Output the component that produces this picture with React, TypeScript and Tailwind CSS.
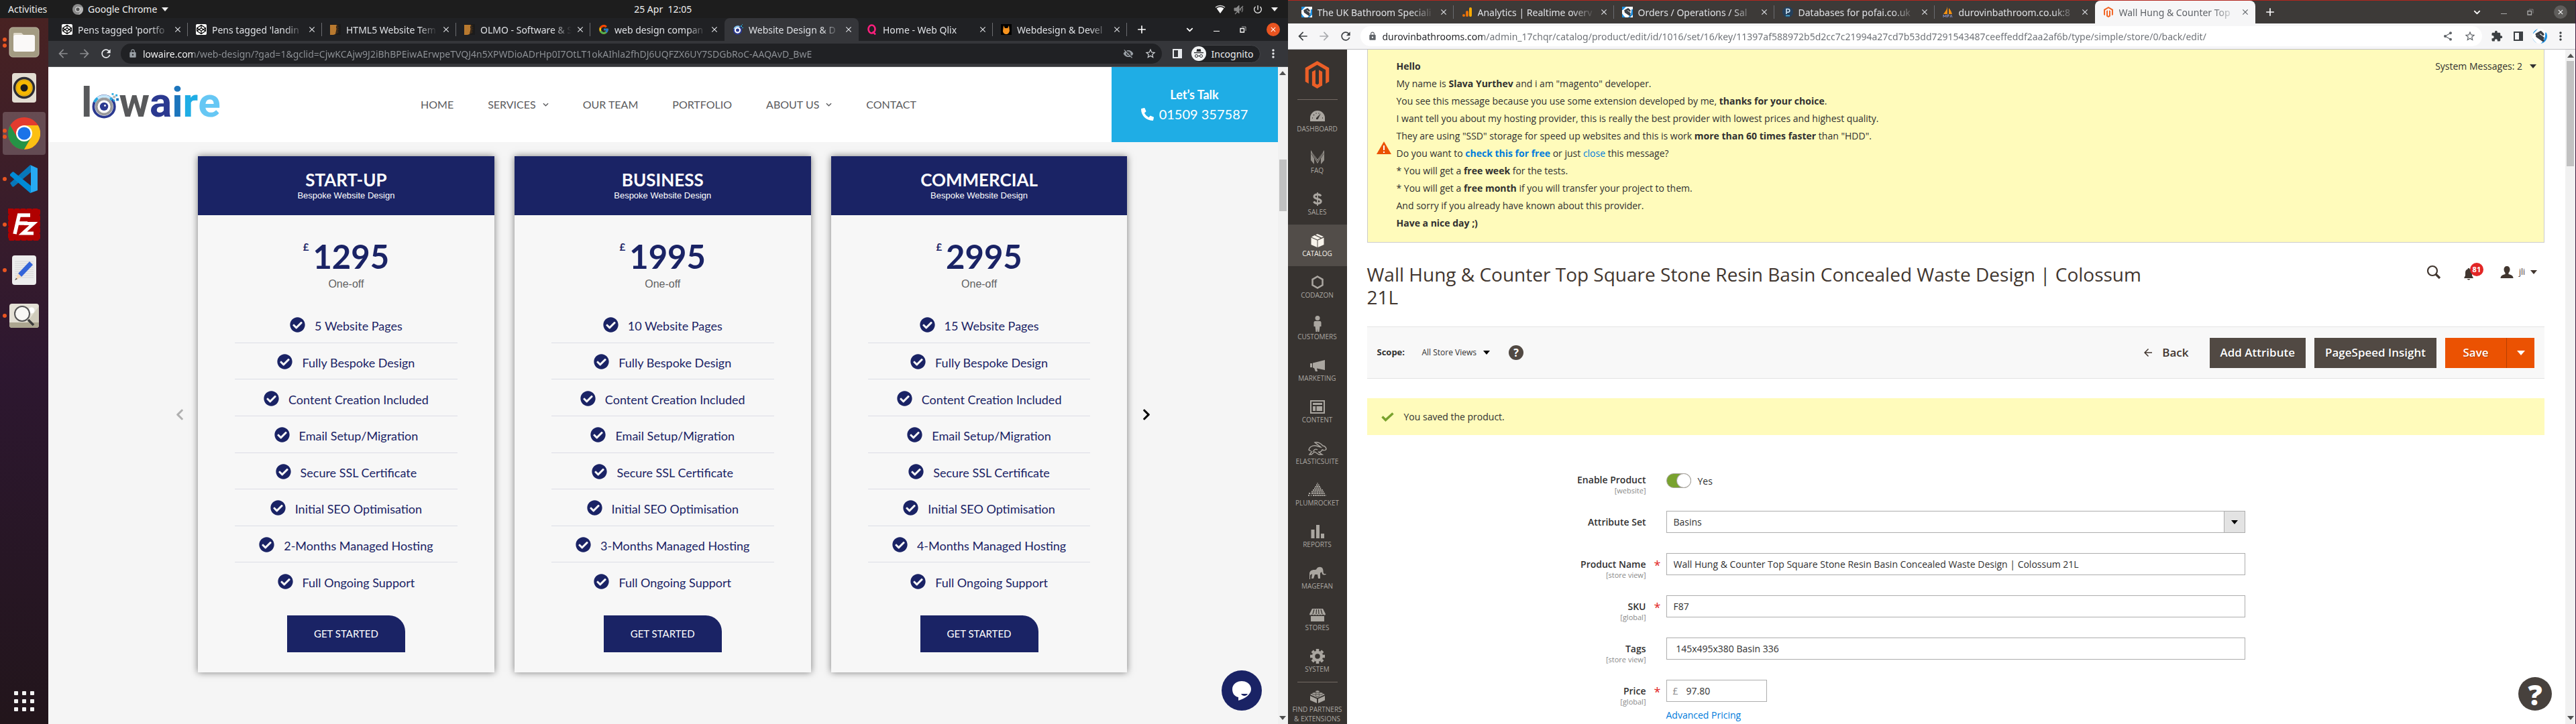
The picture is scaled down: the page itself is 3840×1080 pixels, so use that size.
import React from "react";
import {
  MdArrowBack,
  MdArrowForward,
  MdRefresh,
  MdLock,
  MdStarBorder,
  MdExtension,
  MdShare,
  MdMoreVert,
  MdVisibilityOff,
  MdAdd,
  MdClose,
  MdPowerSettingsNew,
} from "react-icons/md";
import {
  FaCodepen,
  FaMagento,
  FaPhoneAlt,
  FaCheckCircle,
  FaChevronLeft,
  FaChevronRight,
  FaChevronDown,
} from "react-icons/fa";
import { FcGoogle } from "react-icons/fc";

const UI = "font-['Noto_Sans','Open_Sans',sans-serif]";

/* ---------- small shared pieces ---------- */

function Caret({ className = "" }: { className?: string }) {
  return (
    <svg viewBox="0 0 10 6" className={"h-[6px] w-[10px] shrink-0 fill-current " + className} aria-hidden="true">
      <path d="M0 0h10L5 6z" />
    </svg>
  );
}

function Restore() {
  return (
    <svg viewBox="0 0 10 10" className="size-[10px]" fill="none" stroke="currentColor" aria-hidden="true">
      <path d="M1 3.500h5.500v5.500H1z" strokeWidth="1.300" />
      <path d="M3 1h6v6" opacity=".6" />
    </svg>
  );
}

function SidePanel() {
  return (
    <svg viewBox="0 0 14 14" className="size-[14px] fill-current" aria-hidden="true">
      <path fillRule="evenodd" d="M0 0h14v14H0zM2 2v10h6V2z" />
    </svg>
  );
}

/* ---------- favicons ---------- */

const favicons: Record<string, React.ReactNode> = {
  codepen: (
    <span className="flex size-4 items-center justify-center rounded-[2px] bg-white text-black">
      <FaCodepen className="size-[14px]" />
    </span>
  ),
  olmo: (
    <svg viewBox="0 0 16 16" className="size-4">
      <rect width="16" height="16" fill="#1b1b1b" />
      <path d="M0 1h10l-1 4 1 2-1 3-1 5-3 1H0z" fill="#b8792f" />
      <path d="M10 1l3 1-2 2 3 1-3 2 3 1-3 2 2 2-4 3z" fill="#3d2b1a" />
    </svg>
  ),
  google: <FcGoogle className="size-4" />,
  eye: (
    <svg viewBox="0 0 16 16" className="size-4">
      <circle cx="7.500" cy="9" r="5.700" fill="#fff" stroke="#2b3990" strokeWidth="2" />
      <path d="M2.500 7a5.700 5.700 0 0 1 8-3.200" fill="none" stroke="#8fd0f0" strokeWidth="2" />
      <circle cx="7.500" cy="9" r="2.500" fill="#2b3990" />
      <path d="M12 2h2v2h-2zM14 0h1v1h-1zM14 5h2v1h-2z" fill="#27aae1" />
    </svg>
  ),
  qlix: (
    <svg viewBox="0 0 16 16" className="size-4" fill="none" stroke="#ff1f7d" strokeWidth="2.600">
      <ellipse cx="7.500" cy="7.500" rx="5" ry="6" />
      <path d="M9 11l4 4.500" />
    </svg>
  ),
  fox: (
    <svg viewBox="0 0 16 16" className="size-4">
      <rect width="16" height="16" fill="#000" />
      <path d="M4 2l2 4h4l2-4 1 8c-1 4-3 5-5 5s-5-1-5-5z" fill="#f7931e" />
    </svg>
  ),
  durovin: (
    <svg viewBox="0 0 16 16" className="size-4">
      <rect width="16" height="16" fill="#fff" />
      <path d="M0 0h6L1 5H0zM16 4v8l-4 4H9c4-3 5-7 5-12zM0 10l2 3 3 3H0z" fill="#1d8fe0" />
      <g stroke="#3b3f45" strokeWidth="2.600" strokeLinecap="round">
        <path d="M4.500 6L9 3.500M5 8l6.500 4.500M9 3.500l2.500 2.500M7.500 7l4 3" />
      </g>
    </svg>
  ),
  analytics: (
    <svg viewBox="0 0 16 16" className="size-4">
      <rect x="11" y="1" width="4" height="14" rx="2" fill="#fbab00" />
      <rect x="6" y="6" width="4" height="9" rx="2" fill="#e8710a" />
      <circle cx="3" cy="13" r="2" fill="#e8710a" />
    </svg>
  ),
  plesk: (
    <svg viewBox="0 0 16 16" className="size-4" fill="none">
      <circle cx="8" cy="8" r="8" fill="#24405c" />
      <path d="M6 11V3.500h2.500a2.300 2.300 0 0 1 0 4.700H6" stroke="#cfe6f7" strokeWidth="1.600" />
      <path d="M5 13.500h6" stroke="#53bce6" strokeWidth="1.400" />
    </svg>
  ),
  pma: (
    <svg viewBox="0 0 16 16" className="size-4">
      <path d="M7 0v11H1c2-3 5-6 6-11zM9 2c2 2 4 5 5 9H9z" fill="#f29111" />
      <path d="M1 12v4M1 12l2 3 2-3v4M7 16v-4h2v2H7M11 16l1.500-4 1.500 4" fill="none" stroke="#8b93c4" />
    </svg>
  ),
  magento: <FaMagento className="size-4 text-[#f26322]" />,
};

type Tab = { icon: string; title: string; active?: boolean };

function TabStrip({ tabs, dark }: { tabs: Tab[]; dark: boolean }) {
  const activeBg = dark ? "bg-[#35363a]" : "bg-[#f6f6f7] text-[#5f6368]";
  return (
    <div
      className={
        "flex items-stretch pl-2 text-[#dfe1e5] " + (dark ? "h-[34px] bg-[#202124]" : "h-[35px] border-t border-[#b3261e] bg-[#3d3a38]")
      }
    >
      {tabs.map((t, i) => (
        <div
          key={t.title}
          className={
            "flex min-w-0 flex-1 items-center pl-3 " +
            (dark ? "max-w-[200px] " : "max-w-[239px] ") +
            (t.active ? "rounded-t-lg " + activeBg : "")
          }
        >
          <span className="mr-2 shrink-0">{favicons[t.icon]}</span>
          <span className="min-w-0 flex-1 whitespace-nowrap text-[14px] [mask-image:linear-gradient(to_right,black_80%,transparent)]">
            {t.title}
          </span>
          <button type="button" aria-label={"Close " + t.title} className="ml-[6px] shrink-0">
            <MdClose className="size-[14px]" />
          </button>
          <span
            className={"ml-[7px] h-5 w-px " + (t.active || (tabs[i + 1] && tabs[i + 1].active) ? "bg-transparent" : "bg-[#6b6c70]")}
          />
        </div>
      ))}
      <button type="button" aria-label="New tab" className="ml-3 text-white">
        <MdAdd className="size-5" />
      </button>
      <div className="ml-auto flex items-center gap-[30px] pr-3 text-white">
        <button type="button" aria-label="Search tabs">
          <FaChevronDown className="size-[11px]" />
        </button>
        <button type="button" aria-label="Minimise" className={"mt-1 h-px w-[9px] " + (dark ? "bg-white" : "bg-[#aaa]")} />
        <button type="button" aria-label="Restore" className={dark ? "" : "text-[#aaa]"}>
          <Restore />
        </button>
        <button
          type="button"
          aria-label="Close window"
          className={"flex size-5 items-center justify-center rounded-full " + (dark ? "bg-[#e95420]" : "bg-[#5f5d5b]")}
        >
          <MdClose className="size-[12px]" />
        </button>
      </div>
    </div>
  );
}

function ScrollBar({ thumb }: { thumb: string }) {
  return (
    <div className="flex w-[15px] shrink-0 flex-col items-center justify-between bg-[#f1f1f1] py-[6px] text-[#505050]">
      <Caret className="h-[4px] w-[8px] rotate-180" />
      <div className={"w-[11px] bg-[#c1c1c1] " + thumb} />
      <span className="flex-1" />
      <Caret className="h-[4px] w-[8px]" />
    </div>
  );
}

/* ---------- left screen: desktop shell ---------- */

function TopBar() {
  return (
    <div className="flex h-[27px] items-center bg-[#1d1d1d] text-[14px] text-[#eeeeee]">
      <div className="flex flex-1 items-center">
        <button type="button" className="w-[108px] pl-3 text-left">
          Activities
        </button>
        <button type="button" className="flex items-center gap-[7px]">
          <svg viewBox="0 0 16 16" className="size-4">
            <circle cx="8" cy="8" r="8" fill="#8b8b8b" />
            <path d="M8 4.500h7A8 8 0 0 1 9 16l3-6z" fill="#b5b5b5" />
            <circle cx="8" cy="8" r="3.800" fill="#e6e6e6" />
            <circle cx="8" cy="8" r="2.700" fill="#555" />
          </svg>
          Google Chrome
          <Caret />
        </button>
      </div>
      <time className="whitespace-pre pl-[72px]">25 Apr  12:05</time>
      <div className="flex flex-1 items-center justify-end gap-3 pr-[15px]">
        <svg viewBox="0 0 16 14" className="h-[14px] w-4" aria-label="Wi-Fi">
          <path d="M1 4a10.500 10.500 0 0 1 14 0" fill="none" stroke="#ddd" strokeWidth="1.300" />
          <path d="M2.600 5.500a9 9 0 0 1 10.800 0L8 13z" fill="#fff" />
        </svg>
        <svg viewBox="0 0 16 16" className="size-4 text-[#888]" aria-label="Muted" fill="none" stroke="currentColor">
          <path d="M1 6h3l4-4v12L4 10H1z" fill="currentColor" />
          <path d="M10 6c1 1 1 3 0 4M12 4c2 2 2 6 0 8M14 3L2 15" strokeWidth="1.200" />
        </svg>
        <MdPowerSettingsNew className="size-4" />
        <Caret className="h-[5px]" />
      </div>
    </div>
  );
}

const dockIcons: { name: string; dots: number; active?: boolean; art: React.ReactNode }[] = [
  {
    name: "Files",
    dots: 2,
    art: (
      <svg viewBox="0 0 48 48" className="size-12">
        <rect x="2" y="2" width="44" height="44" rx="5" fill="#a39b82" stroke="#beb8a4" />
        <path d="M8 12c0-2 1-2 2-2h10l4 4v4H8z" fill="#ded8c8" />
        <rect x="8" y="13" width="32" height="25" rx="3" fill="#faf9f8" />
      </svg>
    ),
  },
  {
    name: "Rhythmbox",
    dots: 0,
    art: (
      <svg viewBox="0 0 48 48" className="size-12">
        <rect x="6" y="2" width="36" height="44" rx="4" fill="#e3ddd2" />
        <circle cx="24" cy="24" r="14.500" fill="#f0c02a" stroke="#2c2c33" strokeWidth="3.500" />
        <circle cx="24" cy="24" r="11.500" fill="#f5b800" stroke="#d49d10" />
        <circle cx="24" cy="24" r="5.500" fill="#1c1c1c" />
      </svg>
    ),
  },
  {
    name: "Google Chrome",
    dots: 2,
    active: true,
    art: (
      <svg viewBox="0 0 48 48" className="size-12">
        <circle cx="24" cy="24" r="24" fill="#e33b2e" />
        <path d="M3.200 12A24 24 0 0 0 24 48l10.400-18L24 36 13.600 30z" fill="#259346" />
        <path d="M24 12h20.800A24 24 0 0 1 24 48l10.400-18z" fill="#fcc013" />
        <circle cx="24" cy="24" r="12" fill="#fff" />
        <circle cx="24" cy="24" r="9.600" fill="#1a73e8" />
      </svg>
    ),
  },
  {
    name: "Visual Studio Code",
    dots: 1,
    art: (
      <svg viewBox="0 0 48 48" className="size-12">
        <path d="M3 30l3 5c1 1 2 1 3 0L34 14V3c-1 0-1 0-2 1z" fill="#0877b9" />
        <path d="M3 17l3-3c1-1 2-1 3 0l25 20v11c-1 0-1 0-2-1L3 19z" fill="#008bd6" />
        <path d="M33 3l11 5v33l-11 4c1 0 1-1 1-2V5c0-1 0-2-1-2z" fill="#27a9f2" />
      </svg>
    ),
  },
  {
    name: "FileZilla",
    dots: 1,
    art: (
      <svg viewBox="0 0 48 48" className="size-12">
        <rect x="2" y="2" width="44" height="44" fill="#b00000" stroke="#b00000" strokeWidth="4" strokeDasharray="5 4" strokeLinecap="round" />
        <g fill="none" stroke="#fff" strokeWidth="5.500">
          <path d="M33 10H16.500L10 38M14 22h15" />
          <path d="M24 22.500h14L22 37h16" strokeWidth="5" />
        </g>
      </svg>
    ),
  },
  {
    name: "Text Editor",
    dots: 1,
    art: (
      <svg viewBox="0 0 48 48" className="size-12">
        <rect x="6" y="2" width="36" height="44" rx="4" fill="#ededed" />
        <path d="M10 11h28M10 14h28M10 17h28M10 20h28M10 23h28M10 26h28M10 29h28M10 32h28M10 35h28" stroke="#cfcfcf" strokeWidth=".8" />
        <path d="M32 11l5 5-17 18-5-5z" fill="#3465d9" />
        <path d="M15 29l5 5-9 5z" fill="#f7d9b8" />
        <path d="M12 36l2 1-4 2z" fill="#333" />
      </svg>
    ),
  },
  {
    name: "Image Viewer",
    dots: 1,
    art: (
      <svg viewBox="0 0 48 48" className="size-12">
        <rect x="2" y="6" width="44" height="36" rx="4" fill="#e4e1d6" />
        <path d="M2 34h44v4c0 3-2 4-4 4H6c-3 0-4-2-4-4z" fill="#aca690" />
        <path d="M46 10v24H28z" fill="#d0ccbc" />
        <circle cx="35" cy="16" r="4.500" fill="#fff" />
        <circle cx="21" cy="21" r="11" fill="#fff" fillOpacity=".75" stroke="#555" strokeWidth="2" />
        <path d="M30 30l8 8" stroke="#3c3c3c" strokeWidth="3.500" />
      </svg>
    ),
  },
];

function Dock() {
  return (
    <nav
      aria-label="Dock"
      className="flex w-[72px] shrink-0 flex-col items-center gap-1 bg-linear-to-b from-[#482222] via-[#2d1730] via-50% to-[#22151b] pt-1 pb-[19px]"
    >
      {dockIcons.map((d) => (
        <button
          key={d.name}
          type="button"
          aria-label={d.name}
          className={"relative flex size-16 items-center justify-center rounded " + (d.active ? "bg-white/20" : "")}
        >
          <span className="absolute inset-y-0 left-0 flex flex-col justify-center gap-[3px]">
            {Array.from({ length: d.dots }, (_, i) => (
              <span key={i} className="size-[6px] rounded-full bg-[#e95420]" />
            ))}
          </span>
          {d.art}
        </button>
      ))}
      <button type="button" aria-label="Show applications" className="mt-auto grid grid-cols-3 gap-[6px]">
        {Array.from({ length: 9 }, (_, i) => (
          <span key={i} className="size-[6px] rounded-[1px] bg-[#f2f2f2]" />
        ))}
      </button>
    </nav>
  );
}

/* ---------- left screen: web page ---------- */

const leftTabs: Tab[] = [
  { icon: "codepen", title: "Pens tagged 'portfo" },
  { icon: "codepen", title: "Pens tagged 'landin" },
  { icon: "olmo", title: "HTML5 Website Tem" },
  { icon: "olmo", title: "OLMO - Software & S" },
  { icon: "google", title: "web design compan" },
  { icon: "eye", title: "Website Design & D", active: true },
  { icon: "qlix", title: "Home - Web Qlix" },
  { icon: "fox", title: "Webdesign & Devel" },
];

function Logo() {
  return (
    <a
      href="#home"
      aria-label="lowaire"
      className="flex h-12 items-end font-['Roboto',sans-serif] text-[62px] leading-[54px] font-bold text-[#58595b]"
    >
      <span>l</span>
      <svg viewBox="0 0 42 44" className="mb-[2px] h-[42px] w-[40px]" aria-hidden="true">
        <circle cx="19" cy="24" r="16.500" fill="#fff" stroke="#2b3990" strokeWidth="4" />
        <path d="M4 17a16.500 16.500 0 0 1 27-4" fill="none" stroke="#c5e8fb" strokeWidth="4" />
        <path d="M4 17a16 16 0 0 1 5-6" fill="none" stroke="#27aae1" strokeWidth="4" />
        <circle cx="19" cy="24" r="12" fill="#fff" stroke="#9a9a9c" strokeWidth="4" />
        <circle cx="19" cy="24" r="6.500" fill="#2b3990" />
        <circle cx="20.500" cy="22.500" r="1.500" fill="#fff" />
        <path d="M31 3h3v3h-3zM37 5h3v3h-3zM33 13h3v3h-3zM28 10h4v4h-4z" fill="#27aae1" />
        <path d="M38 11h4v4h-4z" fill="#1c75bc" />
        <path d="M33 7h4v4h-4z" fill="#b9b9b9" />
      </svg>
      <span>w</span>
      <span className="text-[#2b3990]">a</span>
      <span className="text-[#1c75bc]">i</span>
      <span className="text-[#1fade5]">r</span>
      <span className="text-[#66c7f4]">e</span>
    </a>
  );
}

const navItems = [
  { label: "HOME" },
  { label: "SERVICES", menu: true },
  { label: "OUR TEAM" },
  { label: "PORTFOLIO" },
  { label: "ABOUT US", menu: true },
  { label: "CONTACT" },
];

function SiteHeader() {
  return (
    <header className="flex h-[112px] items-center bg-white">
      <div className="w-[555px] pl-[49px]">
        <Logo />
      </div>
      <nav aria-label="Main" className="flex items-center gap-[51px] text-[16px] text-[#5b5b5e]">
        {navItems.map((n) => (
          <a key={n.label} href={"#" + n.label.toLowerCase().replace(" ", "-")} className="flex items-center gap-[10px]">
            {n.label}
            {n.menu && (
              <svg viewBox="0 0 10 6" className="h-[6px] w-[9px]" fill="none" stroke="currentColor" strokeWidth="1.500">
                <path d="M1 1l4 4 4-4" />
              </svg>
            )}
          </a>
        ))}
      </nav>
      <a
        href="tel:01509357587"
        className="ml-auto flex w-[248px] flex-col items-center justify-center self-stretch bg-[#1fade5] text-white"
      >
        <span className="text-[18px] leading-[28px] font-bold">Let’s Talk</span>
        <span className="flex items-center gap-2 text-[20px] leading-[30px]">
          <FaPhoneAlt className="size-[19px]" />
          01509 357587
        </span>
      </a>
    </header>
  );
}

const plans = [
  { name: "START-UP", price: "1295", pages: "5 Website Pages", months: "2-Months Managed Hosting" },
  { name: "BUSINESS", price: "1995", pages: "10 Website Pages", months: "3-Months Managed Hosting" },
  { name: "COMMERCIAL", price: "2995", pages: "15 Website Pages", months: "4-Months Managed Hosting" },
];

function PlanCard({ plan }: { plan: (typeof plans)[number] }) {
  const features = [
    plan.pages,
    "Fully Bespoke Design",
    "Content Creation Included",
    "Email Setup/Migration",
    "Secure SSL Certificate",
    "Initial SEO Optimisation",
    plan.months,
    "Full Ongoing Support",
  ];
  return (
    <article className="flex flex-1 flex-col items-center bg-[#f7f7f7] pb-[30px] text-[#1a2365] shadow-[0_0_10px_rgba(0,0,0,0.5)]">
      <div className="flex h-[88px] w-full flex-col items-center justify-center bg-[#1a2365] text-white">
        <h2 className="text-[26px] leading-[30px] font-bold">{plan.name}</h2>
        <p className="font-['Liberation_Sans',sans-serif] text-[13px] leading-[18px]">Bespoke Website Design</p>
      </div>
      <p className="mt-[36px] flex items-start gap-[6px] leading-[50px] font-bold">
        <span className="text-[15px] leading-[22px]">£</span>
        <span className="text-[49px]">{plan.price}</span>
      </p>
      <p className="mt-[6px] font-['Liberation_Sans',sans-serif] text-[16px] leading-[22px] text-[#616161]">One-off</p>
      <ul className="mt-[22px] flex h-[436px] w-full flex-col px-[55px]">
        {features.map((f) => (
          <li
            key={f}
            className="flex flex-1 items-center justify-center gap-[14px] border-b border-[#dcdde6] pt-[6px] text-[18px] last:border-b-0"
          >
            <FaCheckCircle className="mb-1 size-[23px]" />
            {f}
          </li>
        ))}
      </ul>
      <a href="#get-started" className="mt-[25px] flex h-[55px] w-[176px] items-center justify-center rounded-tr-[24px] bg-[#1a2365] text-[15px] text-white">
        GET STARTED
      </a>
    </article>
  );
}

function PricingPage() {
  return (
    <div className="relative flex min-w-0 flex-1 flex-col bg-[#f5f5f5] font-['Lato',sans-serif]">
      <SiteHeader />
      <main className="flex items-center px-[190px] pt-[21px]">
        <button type="button" aria-label="Previous plans" className="flex w-[33px] shrink-0 text-[#b0b0b0]">
          <FaChevronLeft className="h-[19px] w-[12px]" />
        </button>
        <div className="flex flex-1 gap-[30px]">
          {plans.map((p) => (
            <PlanCard key={p.name} plan={p} />
          ))}
        </div>
        <button type="button" aria-label="Next plans" className="flex w-[34px] shrink-0 justify-end text-black">
          <FaChevronRight className="h-[19px] w-[12px]" />
        </button>
      </main>
      <button
        type="button"
        aria-label="Open chat"
        className="absolute right-6 bottom-5 flex size-[60px] items-center justify-center rounded-full bg-[#1a2365]"
      >
        <svg viewBox="0 0 30 30" className="size-[30px]">
          <path d="M15 1c8 0 14 5 14 12 0 8-9 14-19 17v-5C4 24 1 19 1 13 1 6 7 1 15 1z" fill="#fff" />
          <path d="M14 20h10c-2 4-8 4-10 0z" fill="#1a2365" />
        </svg>
      </button>
    </div>
  );
}

function LeftScreen() {
  return (
    <section className="flex flex-1 flex-col">
      <TopBar />
      <div className="flex min-h-0 flex-1">
        <Dock />
        <div className="flex min-w-0 flex-1 flex-col">
          <TabStrip tabs={leftTabs} dark />
          <div className="flex h-[39px] items-center border-b border-[#55565a] bg-[#35363a] text-[#e8eaed]">
            <div className="flex w-[108px] items-center gap-3 pl-3">
              <MdArrowBack className="size-5 text-[#8b8c8f]" />
              <MdArrowForward className="size-5 text-[#8b8c8f]" />
              <MdRefresh className="size-5" />
            </div>
            <label className="flex h-[30px] flex-1 items-center gap-2 rounded-full bg-[#202124] pr-2 pl-[11px] text-[#9aa0a6]">
              <MdLock className="size-[14px] shrink-0" />
              <input
                type="text"
                aria-label="Address"
                defaultValue="lowaire.com/web-design/?gad=1&gclid=CjwKCAjw9J2iBhBPEiwAErwpeTVQJ4n5XPWDioADrHp0I7OtLT1okAIhla2fhDJ6UQFZX6UY7SDGbRoC-AAQAvD_BwE"
                className="min-w-0 flex-1 bg-[linear-gradient(to_right,#ffffff_75px,#8f9398_75px)] bg-clip-text text-[14px] text-transparent outline-none"
              />
              <MdVisibilityOff className="size-4 shrink-0" />
              <MdStarBorder className="ml-2 size-[18px] shrink-0 text-[#d0d3d7]" />
            </label>
            <button type="button" aria-label="Side panel" className="ml-4">
              <SidePanel />
            </button>
            <button
              type="button"
              className="ml-[13px] flex h-[27px] items-center gap-2 rounded-full border border-[#45464a] bg-[#202124] pr-[9px] text-[14px]"
            >
              <svg viewBox="0 0 22 22" className="size-[22px]">
                <circle cx="11" cy="11" r="11" fill="#f1f3f4" />
                <path d="M7.500 8l1-4 2.500.6 2.500-.6 1 4zM4 9h14v1.200H4z" fill="#202124" />
                <g fill="none" stroke="#202124">
                  <circle cx="7.500" cy="14.500" r="2" />
                  <circle cx="14.500" cy="14.500" r="2" />
                  <path d="M9.500 14.500h3" />
                </g>
              </svg>
              Incognito
            </button>
            <button type="button" aria-label="Menu" className="ml-[9px] mr-3">
              <MdMoreVert className="size-5" />
            </button>
          </div>
          <div className="flex min-h-0 flex-1">
            <PricingPage />
            <ScrollBar thumb="mt-[126px] h-[77px]" />
          </div>
        </div>
      </div>
    </section>
  );
}

/* ---------- right screen: shop admin ---------- */

const rightTabs: Tab[] = [
  { icon: "durovin", title: "The UK Bathroom Speciali" },
  { icon: "analytics", title: "Analytics | Realtime overv" },
  { icon: "durovin", title: "Orders / Operations / Sal" },
  { icon: "plesk", title: "Databases for pofai.co.uk" },
  { icon: "pma", title: "durovinbathroom.co.uk:8" },
  { icon: "magento", title: "Wall Hung & Counter Top", active: true },
];

const glyph = "h-6 w-[28px]";

const menu: { label: string; active?: boolean; art: React.ReactNode }[] = [
  {
    label: "Dashboard",
    art: (
      <svg viewBox="0 0 28 24" className={glyph} fill="currentColor">
        <path d="M3 20v-5a11 11 0 0 1 22 0v5z" />
        <path d="M6 15h1M8 10l1 1M12 7.500v1M16 7.500v1M21 15h1" stroke="#373330" strokeWidth="1.500" />
        <path d="M19 8l-4.500 9h-2.500v-2z" fill="#373330" />
      </svg>
    ),
  },
  {
    label: "FAQ",
    art: (
      <svg viewBox="0 0 28 24" className={glyph} fill="currentColor">
        <path d="M4 1l10 14L24 1v15l-5 6V12l-5 9-5-9v10l-5-6z" opacity=".8" />
        <path d="M5 6l4 7M23 6l-4 7M6 4l8 14 8-14" stroke="#373330" fill="none" strokeWidth=".8" />
      </svg>
    ),
  },
  {
    label: "Sales",
    art: (
      <svg viewBox="0 0 28 24" className={glyph} fill="none" stroke="currentColor" strokeWidth="3">
        <path d="M19 7.500c-1-2-3-2.500-5-2.500-3 0-5 1-5 3.300 0 4.700 10.200 2.200 10.200 7 0 2.200-2.200 3.200-5.200 3.200-2.500 0-4.500-1-5.500-3" />
        <path d="M14 2v20" strokeWidth="1.800" />
      </svg>
    ),
  },
  {
    label: "Catalog",
    active: true,
    art: (
      <svg viewBox="0 0 28 24" className={glyph} fill="currentColor">
        <path d="M4.500 7.500l9 4v10.500l-9-4zM23.500 7.500l-9 4v10.500l9-4zM9.500 4l9 4.300-4.500 2.200-9-4zM14 2l9 4-3 1.500-9-4.200z" />
      </svg>
    ),
  },
  {
    label: "Codazon",
    art: (
      <svg viewBox="0 0 28 24" className={glyph} fill="none" stroke="currentColor" strokeWidth="2.500">
        <path d="M14 3.500l7.500 4.300v8.500L14 20.500l-7.500-4.200V7.800z" />
      </svg>
    ),
  },
  {
    label: "Customers",
    art: (
      <svg viewBox="0 0 28 24" className={glyph} fill="currentColor">
        <circle cx="14" cy="3.500" r="3.500" />
        <path d="M10.500 8h7c1.500 0 2 1 2 2.500V16h-2l-1 8h-2l-.5-5-.5 5h-2l-1-8h-2v-5.500C8.500 9 9 8 10.500 8z" />
      </svg>
    ),
  },
  {
    label: "Marketing",
    art: (
      <svg viewBox="0 0 28 24" className={glyph} fill="currentColor">
        <path d="M3 9h3v6H3zM7 8.500L25 4v15l-12-2.500 1 4.500h-3l-2-5-2-.5z" />
      </svg>
    ),
  },
  {
    label: "Content",
    art: (
      <svg viewBox="0 0 28 24" className={glyph} fill="currentColor">
        <path fillRule="evenodd" d="M3 2h22v20H3zM5 4v16h18V4zM7 6h14v3H7zM7 11h4v7H7zM12.500 11H21v7h-8.500z" />
      </svg>
    ),
  },
  {
    label: "Elasticsuite",
    art: (
      <svg viewBox="0 0 28 24" className={glyph} fill="none" stroke="currentColor" strokeWidth="1.400">
        <path d="M1 15c0-5 5-8 11-7 3 .5 5 2 7 2l-9-7c4-1 9 1 12 5 3 0 5 3 5 5-1 2-4 2-6 1-1 3-4 4-6 3l6 4h-5l-6-4c-3 2-4 3-5 4H2l4-5M1 14l3 2M8 17c0-3 3-5 6-3" />
      </svg>
    ),
  },
  {
    label: "Plumrocket",
    art: (
      <svg viewBox="0 0 28 24" className={glyph} fill="none" stroke="currentColor" strokeDasharray="2 .7">
        <path d="M13.500 2h1M12 4.500h4.500M10.500 7h8M9 9.500h11M7 12h15M5 14.500h18.500M1 17h3M5 17h20M0 20h2M4 20h1M7 20h19.500" strokeWidth="2.100" />
      </svg>
    ),
  },
  {
    label: "Reports",
    art: (
      <svg viewBox="0 0 28 24" className={glyph} fill="currentColor">
        <path d="M4.500 9h5v13h-5zM12 2h5v20h-5zM19 15h5v7h-5z" />
      </svg>
    ),
  },
  {
    label: "Magefan",
    art: (
      <svg viewBox="0 0 28 24" className={glyph} fill="currentColor">
        <path d="M2 13c0-4 3-6 7-6 2 0 3 0 4-2 2-3 8-3 9 1 1 3 0 6 2 7h3c-1 2-5 2-6 0l-1-3-2 2v8h-3l-1-6h-4l-2 6H5l1-7-3 2v6H2z" />
      </svg>
    ),
  },
  {
    label: "Stores",
    art: (
      <svg viewBox="0 0 28 24" className={glyph} fill="currentColor">
        <path d="M6 3h16l4 8c0 2-3 2-4 0 0 2-4 2-4 0 0 2-4 2-4 0 0 2-4 2-4 0 0 2-4 2-4 0-1 2-4 2-4 0zM4 14h20v8H4z" />
        <path d="M9 4l-2 7M12.500 4L12 11M15.500 4l.5 7M19 4l2 7" stroke="#373330" strokeWidth="1.200" />
      </svg>
    ),
  },
  {
    label: "System",
    art: (
      <svg viewBox="0 0 28 24" className={glyph} fill="none" stroke="currentColor">
        <circle cx="14" cy="12" r="6" strokeWidth="4.500" />
        <path d="M14 1v3M14 20v3M3 12h3M22 12h3M6.200 4.200l2.200 2.200M19.600 17.600l2.200 2.200M21.800 4.200l-2.200 2.200M8.400 17.600l-2.200 2.200" strokeWidth="4.500" />
      </svg>
    ),
  },
];

function AdminMenu() {
  return (
    <nav
      aria-label="Admin"
      className="flex w-[88px] shrink-0 flex-col items-center bg-[#373330] text-[10px] leading-[14px] text-[#aaa6a0] uppercase"
    >
      <a href="#admin" aria-label="Magento" className="mt-[17px] flex h-[41px] w-[41px] shrink-0 items-center justify-center text-[#eb5f27]">
        <FaMagento className="size-[41px]" />
      </a>
      <span className="mt-[16px] h-px w-[60px] shrink-0 bg-[#736963]" />
      {menu.map((m) => (
        <a
          key={m.label}
          href={"#" + m.label.toLowerCase()}
          className={"flex h-[62px] w-full shrink-0 flex-col items-center pt-3 " + (m.active ? "bg-[#524d49] text-[#f7f3eb]" : "")}
        >
          {m.art}
          {m.label}
        </a>
      ))}
      <span className="h-px w-[60px] shrink-0 bg-[#736963]" />
      <a href="#partners" className="flex w-full shrink-0 flex-col items-center pt-[9px] text-center">
        <svg viewBox="0 0 28 24" className={glyph} fill="currentColor">
          <path d="M3 9l11-5 11 5-11 5zM3 11l10 4.500V22L3 17.500zM25 11l-10 4.500V22l10-4.500z" />
          <g stroke="#373330" strokeWidth=".8">
            <ellipse cx="9" cy="7.500" rx="3" ry="1.700" />
            <ellipse cx="14" cy="4.500" rx="3" ry="1.700" />
            <ellipse cx="19" cy="7.500" rx="3" ry="1.700" />
            <ellipse cx="14" cy="10.500" rx="3" ry="1.700" />
          </g>
        </svg>
        Find Partners
        <br />
        &amp; Extensions
      </a>
    </nav>
  );
}

function SystemMessages() {
  return (
    <section aria-label="System messages" className="flex items-start border-x border-b border-[#cccccc] bg-[#fffbbb] pt-3 pb-[15px] text-[14px] leading-[26px]">
      <svg viewBox="0 0 22 19" className="mt-[125px] ml-[13px] h-[19px] w-[22px] shrink-0">
        <path d="M11 0l11 19H0z" fill="#eb5202" />
        <path d="M11 6v7M11 15v2" stroke="#fff" strokeWidth="2" />
      </svg>
      <div className="ml-2 flex-1">
        <p className="font-bold">Hello</p>
        <p>
          My name is <b>Slava Yurthev</b> and i am "magento" developer.
        </p>
        <p>
          You see this message because you use some extension developed by me, <b>thanks for your choice</b>.
        </p>
        <p>I want tell you about my hosting provider, this is really the best provider with lowest prices and highest quality.</p>
        <p>
          They are using "SSD" storage for speed up websites and this is work <b>more than 60 times faster</b> than "HDD".
        </p>
        <p>
          Do you want to{" "}
          <a href="#check" className="font-bold text-[#007bdb]">
            check this for free
          </a>{" "}
          or just{" "}
          <a href="#close" className="text-[#007bdb]">
            close
          </a>{" "}
          this message?
        </p>
        <p>
          * You will get a <b>free week</b> for the tests.
        </p>
        <p>
          * You will get a <b>free month</b> if you will transfer your project to them.
        </p>
        <p>And sorry if you already have known about this provider.</p>
        <p className="font-bold">Have a nice day ;)</p>
      </div>
      <button type="button" className="mr-[11px] flex items-center gap-[11px]">
        System Messages: 2
        <Caret className="w-[8px]" />
      </button>
    </section>
  );
}

function Field({
  id,
  label,
  scope,
  required,
  children,
}: {
  id: string;
  label: string;
  scope?: string;
  required?: boolean;
  children: React.ReactNode;
}) {
  return (
    <div className="flex h-[63px] items-start">
      <label htmlFor={id} className="flex w-[416px] flex-col items-end pt-[7px] text-[14px] leading-[19px] font-semibold">
        {label}
        {scope && <span className="text-[11px] leading-[14px] font-normal text-[#888888]">[{scope}]</span>}
      </label>
      <span className="w-[30px] shrink-0 pt-[9px] pl-3 text-[18px] leading-[19px] text-[#e22626]">{required ? "*" : ""}</span>
      <div className="w-[863px]">{children}</div>
    </div>
  );
}

const box = "h-[33px] w-full border border-[#adadad] bg-white px-[10px] text-[14px] text-[#303030] outline-none";

function ProductForm() {
  return (
    <form className="mt-[50px]">
      <Field id="enabled" label="Enable Product" scope="website">
        <label className="flex h-[33px] items-center gap-[10px] pt-[3px]">
          <input
            id="enabled"
            type="checkbox"
            role="switch"
            defaultChecked
            className="h-[22px] w-[37px] appearance-none rounded-full border border-[#aaa6a0] bg-[#79a22e] before:ml-[15px] before:block before:size-5 before:rounded-full before:bg-white before:shadow-[0_0_0_1px_#aaa6a0]"
          />
          <span className="text-[14px]">Yes</span>
        </label>
      </Field>
      <Field id="attribute-set" label="Attribute Set">
        <div className="relative">
          <select id="attribute-set" className={box + " appearance-none"}>
            <option>Basins</option>
          </select>
          <span className="pointer-events-none absolute inset-y-0 right-0 flex w-8 items-center justify-center border border-[#adadad] bg-[#e3e3e3] text-black">
            <Caret className="h-[5px] w-[8px]" />
          </span>
        </div>
      </Field>
      <Field id="product-name" label="Product Name" scope="store view" required>
        <input
          id="product-name"
          type="text"
          className={box}
          defaultValue="Wall Hung & Counter Top Square Stone Resin Basin Concealed Waste Design | Colossum 21L"
        />
      </Field>
      <Field id="sku" label="SKU" scope="global" required>
        <input id="sku" type="text" className={box} defaultValue="F87" />
      </Field>
      <Field id="tags" label="Tags" scope="store view">
        <input id="tags" type="text" className={box} defaultValue=" 145x495x380 Basin 336" />
      </Field>
      <Field id="price" label="Price" scope="global" required>
        <div className="flex h-[33px] w-[150px] items-center border border-[#adadad] bg-white px-[9px] text-[14px]">
          <span className="w-5 shrink-0 text-[#888888]">£</span>
          <input id="price" type="text" className="min-w-0 flex-1 text-[#303030] outline-none" defaultValue="97.80" />
        </div>
        <a href="#advanced-pricing" className="mt-[10px] block text-[14px] leading-[20px] text-[#007bdb]">
          Advanced Pricing
        </a>
      </Field>
    </form>
  );
}

const adminButton = "flex h-[45px] items-center text-[17px] font-semibold text-white [text-shadow:1px_1px_0_rgba(0,0,0,0.25)]";

function AdminPage() {
  return (
    <main className="relative min-w-0 flex-1 bg-white pr-[31px] pl-[30px] text-[#303030]">
      <SystemMessages />
      <div className="flex items-start justify-between pt-[30px]">
        <h1 className="w-[1170px] text-[28px] leading-[34px] text-[#41362f]">
          Wall Hung &amp; Counter Top Square Stone Resin Basin Concealed Waste Design | Colossum 21L
        </h1>
        <div className="mr-[11px] flex items-center gap-[33px] pt-[3px] text-[#41362f]">
          <button type="button" aria-label="Search">
            <svg viewBox="0 0 22 22" className="size-[22px]" fill="none" stroke="currentColor" strokeWidth="2.200">
              <circle cx="9" cy="9" r="7" />
              <path d="M14 14l6 6" strokeWidth="3.200" />
            </svg>
          </button>
          <button type="button" aria-label="Notifications" className="relative h-5 w-[22px]">
            <svg viewBox="0 0 16 18" className="mt-1 h-[18px] w-4 fill-current">
              <path d="M8 0c1 0 1.500.7 1.500 1.500C12 2.500 13 4 13 7v4l2 4H1l2-4V7c0-3 1-4.500 3.500-5.500C6.500.7 7 0 8 0zM6 16h4c0 2-4 2-4 0z" />
            </svg>
            <span className="absolute -top-1 left-[10px] flex size-5 items-center justify-center rounded-full bg-[#e22626] text-[11px] font-bold text-white">
              81
            </span>
          </button>
          <button type="button" className="flex items-center text-[12px]">
            <svg viewBox="0 0 20 18" className="h-[18px] w-5 fill-current">
              <path d="M10 0c3 0 4.500 2 4.500 5 0 2-1 4-2 5v2c2 .6 7 1.500 7 6H.5c0-4.500 5-5.400 7-6v-2c-1-1-2-3-2-5C5.500 2 7 0 10 0z" />
            </svg>
            <span className="ml-2">jli</span>
            <Caret className="ml-2 h-[5px] w-[8px]" />
          </button>
        </div>
      </div>

      <div className="mt-[27px] flex h-[78px] items-center border-y border-[#e3e3e3] bg-[#f8f8f8] px-[15px]">
        <span className="w-[67px] text-[13px] font-bold">Scope:</span>
        <button type="button" className="flex items-center gap-[10px] text-[12px]">
          All Store Views
          <Caret className="h-[5px] w-[8px] text-black" />
        </button>
        <button
          type="button"
          aria-label="What is this?"
          className="ml-[28px] flex size-[22px] items-center justify-center rounded-full bg-[#514943] text-[16px] font-bold text-white"
        >
          ?
        </button>
        <div className="ml-auto flex items-center gap-[13px]">
          <button type="button" className="mr-[18px] flex items-center gap-3 text-[17px] font-semibold text-[#41362f]">
            <MdArrowBack className="size-[18px]" />
            Back
          </button>
          <button type="button" className={adminButton + " bg-[#514943] px-4"}>
            Add Attribute
          </button>
          <button type="button" className={adminButton + " bg-[#514943] px-4"}>
            PageSpeed Insight
          </button>
          <div className="flex">
            <button type="button" className={adminButton + " w-[91px] justify-center bg-[#eb5202]"}>
              Save
            </button>
            <button
              type="button"
              aria-label="More save options"
              className="flex w-[42px] items-center justify-center border-l border-[#b84002] bg-[#eb5202] text-white"
            >
              <Caret className="h-[9px] w-[12px]" />
            </button>
          </div>
        </div>
      </div>

      <div role="status" className="mt-[29px] flex h-[55px] items-center gap-[15px] bg-[#fffbbb] pl-[21px] text-[14px]">
        <svg viewBox="0 0 19 14" className="h-[14px] w-[19px]" fill="none" stroke="#79a22e" strokeWidth="3.500">
          <path d="M1.500 6.500l5 5 11-10" />
        </svg>
        You saved the product.
      </div>

      <ProductForm />

      <button
        type="button"
        aria-label="Help"
        className="absolute right-5 bottom-5 flex size-[50px] items-center justify-center rounded-full bg-[#47413d] text-[42px] font-extrabold text-white"
      >
        ?
      </button>
    </main>
  );
}

function RightScreen() {
  return (
    <section className="flex flex-1 flex-col border-r border-[#3d1a3d]">
      <TabStrip tabs={rightTabs} dark={false} />
      <div className="flex h-[39px] items-center border-b border-[#bfbfc3] bg-[#f6f6f7] text-[#3c4043]">
        <div className="flex w-[108px] items-center gap-3 pl-3">
          <MdArrowBack className="size-5" />
          <MdArrowForward className="size-5 text-[#a9abae]" />
          <MdRefresh className="size-5" />
        </div>
        <label className="flex h-[30px] flex-1 items-center gap-2 rounded-full bg-white pr-[9px] pl-[11px] text-[#5f6368]">
          <MdLock className="size-[14px] shrink-0" />
          <input
            type="text"
            aria-label="Address"
            defaultValue="durovinbathrooms.com/admin_17chqr/catalog/product/edit/id/1016/set/16/key/11397af588972b5d2cc7c21994a27cd7b53dd7291543487ceeffeddf2aa2af6b/type/simple/store/0/back/edit/"
            className="min-w-0 flex-1 bg-[linear-gradient(to_right,#202124_149px,#6b6f74_149px)] bg-clip-text text-[14px] text-transparent outline-none"
          />
          <MdShare className="size-4 shrink-0" />
          <MdStarBorder className="ml-2 size-[18px] shrink-0" />
        </label>
        <button type="button" aria-label="Extensions" className="ml-[13px]">
          <MdExtension className="size-[18px]" />
        </button>
        <button type="button" aria-label="Side panel" className="ml-4">
          <SidePanel />
        </button>
        <button type="button" aria-label="Profile" className="ml-[14px] overflow-hidden rounded-full *:size-[22px]">
          {favicons.durovin}
        </button>
        <button type="button" aria-label="Menu" className="mr-3 ml-[10px]">
          <MdMoreVert className="size-5" />
        </button>
      </div>
      <div className="flex min-h-0 flex-1 font-['Open_Sans',sans-serif]">
        <AdminMenu />
        <AdminPage />
        <ScrollBar thumb="mt-[5px] h-[157px]" />
      </div>
    </section>
  );
}

export default function App() {
  return (
    <div className={"flex h-screen w-full overflow-hidden bg-black " + UI}>
      <LeftScreen />
      <RightScreen />
    </div>
  );
}
